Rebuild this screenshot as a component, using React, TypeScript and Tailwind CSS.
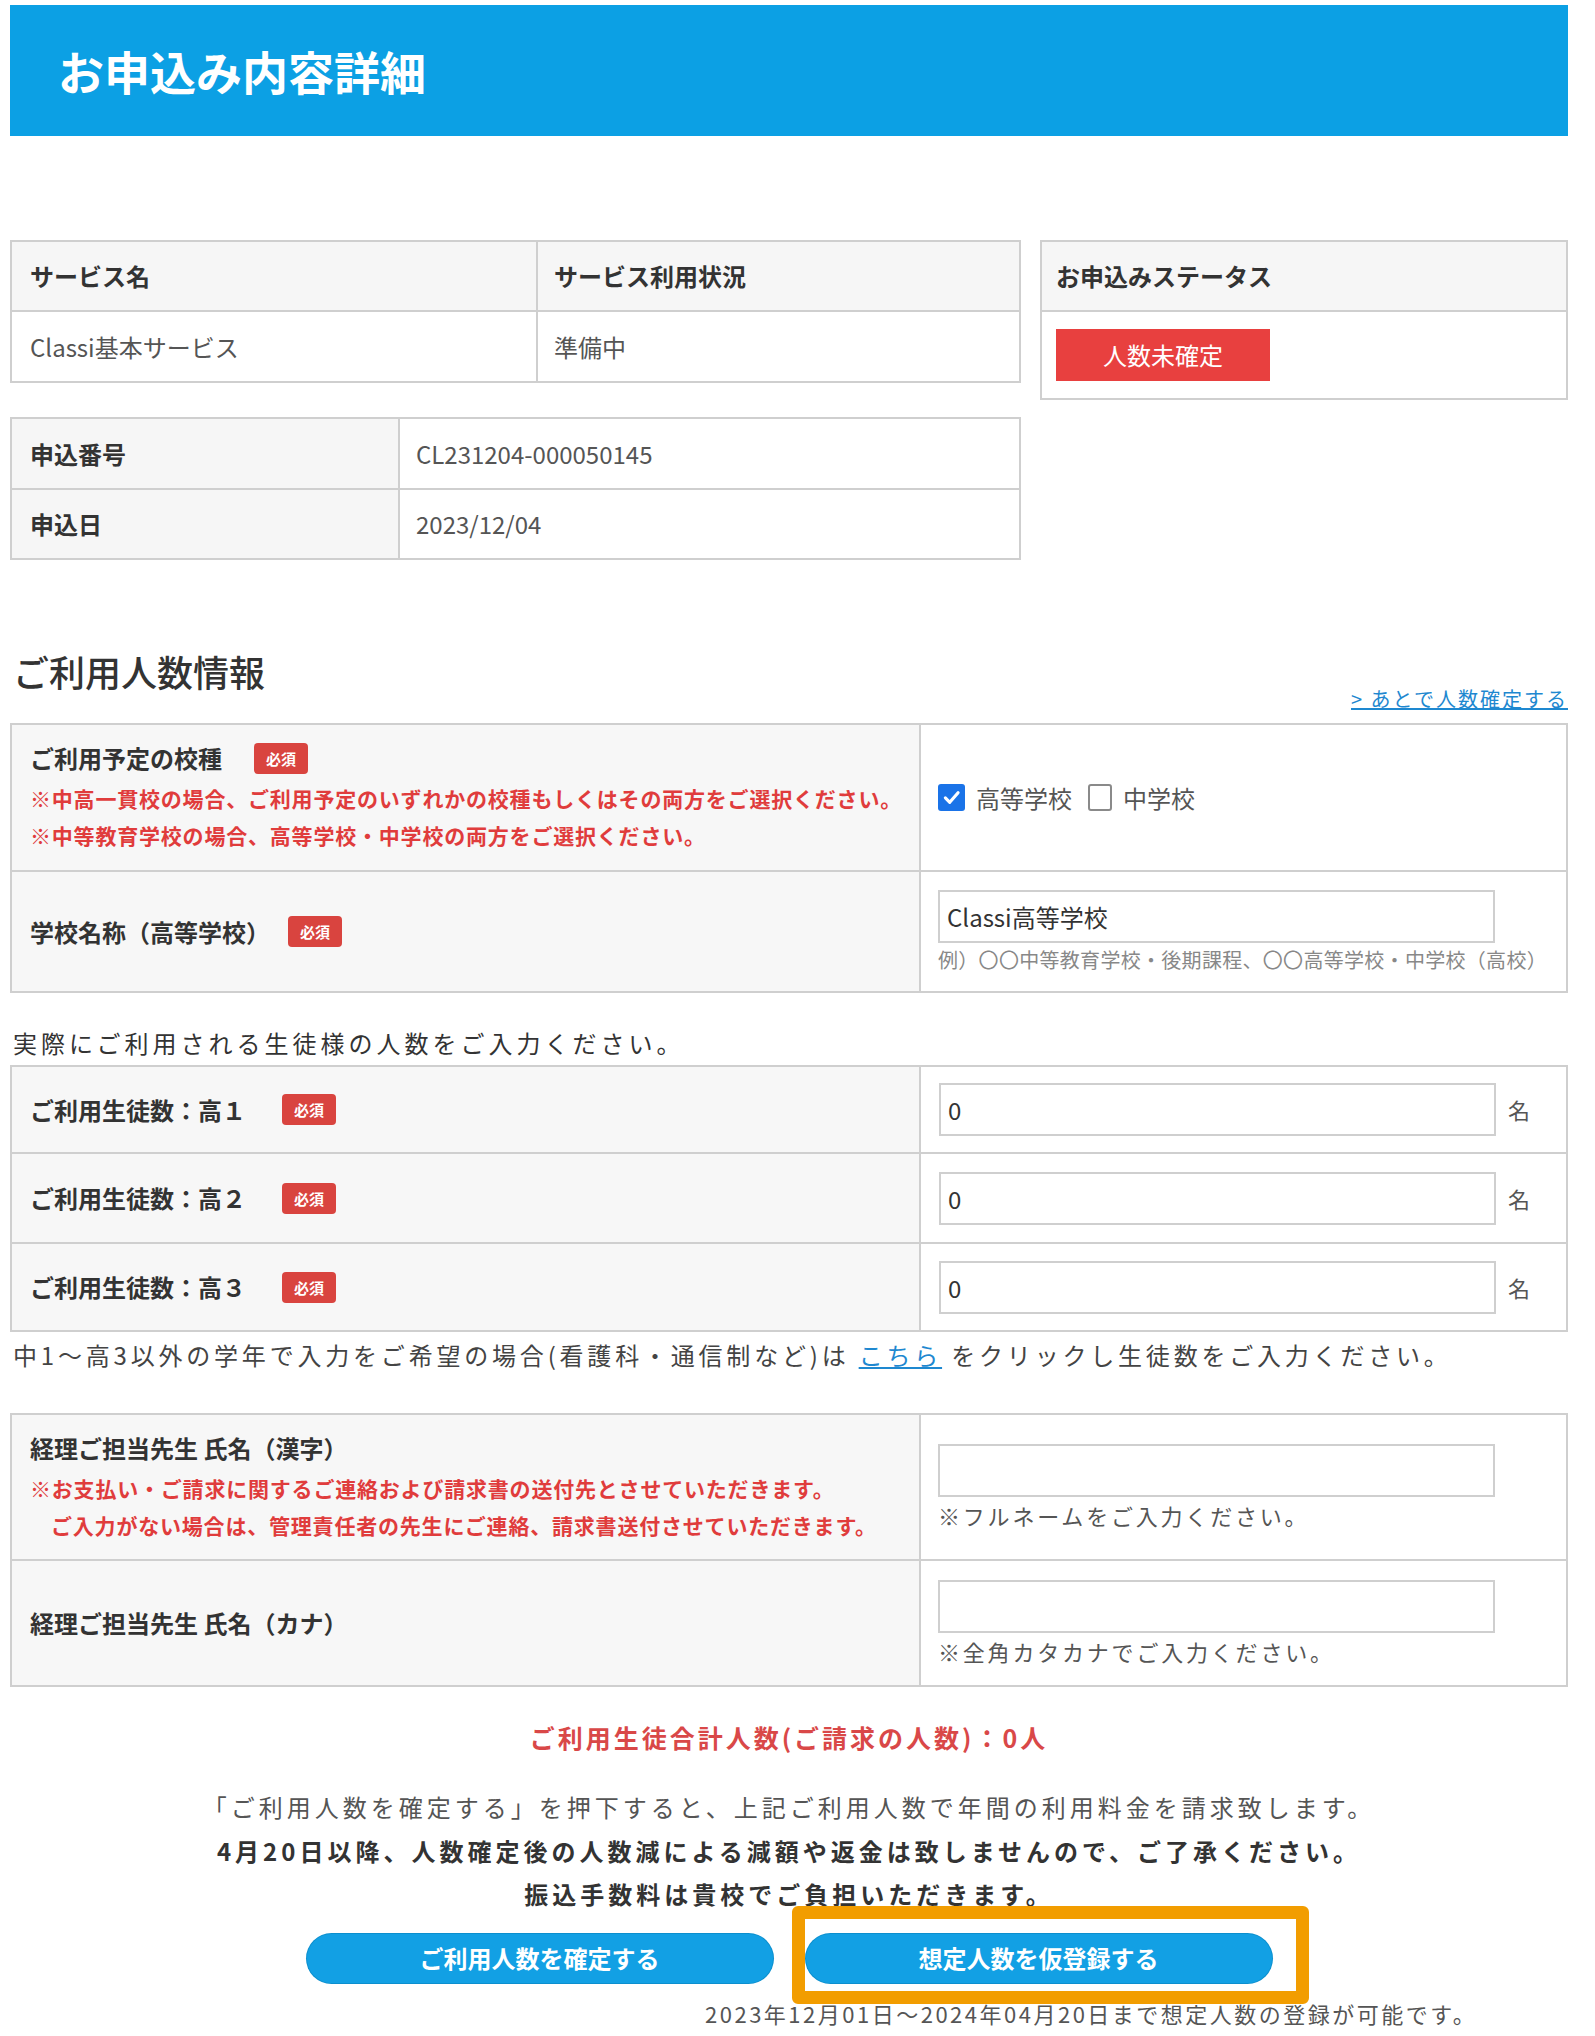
import React from "react";

const line = "border-[#cfcfcf]";

function Required({ className }: { className: string }) {
  return (
    <span
      className={`${className} inline-flex h-[31px] w-[54px] shrink-0 items-center justify-center rounded-[4px] bg-[#d9443f] text-[15px] font-bold leading-none text-white`}
    >
      必須
    </span>
  );
}

function Box({ checked, label }: { checked: boolean; label: string }) {
  return (
    <span className="flex items-center">
      {checked ? (
        <span className="flex h-[27px] w-[27px] items-center justify-center rounded-[3px] bg-[#1a73e8]">
          <svg viewBox="0 0 24 24" className="h-[21px] w-[21px]" fill="none" stroke="#fff" strokeWidth={3.6} strokeLinecap="round" strokeLinejoin="round">
            <polyline points="5 12.5 10 17.5 19.5 6.5" />
          </svg>
        </span>
      ) : (
        <span className="h-[27px] w-[24px] rounded-[3px] border-2 border-[#8a8a8a] bg-white" />
      )}
      <span className="ml-[11px] text-[24px] leading-none text-[#555]">{label}</span>
    </span>
  );
}

function TextBox({ value }: { value: string }) {
  return (
    <input
      readOnly
      value={value}
      className="h-[53px] w-[557px] border-2 border-[#cfcfcf] bg-white px-[7px] text-[24px] text-[#333] outline-none"
    />
  );
}

function CountRow({ label, h, top }: { label: string; h: string; top: boolean }) {
  return (
    <div className={`grid grid-cols-[909px_1fr] ${h} ${top ? "" : "border-t-2"} ${line}`}>
      <div className={`flex items-center border-r-2 ${line} bg-[#f7f7f7] pl-[18px]`}>
        <span className="text-[24px] font-bold text-[#333]">{label}</span>
        <Required className="ml-[36px]" />
      </div>
      <div className="flex items-center pl-[18px]">
        <TextBox value="0" />
        <span className="ml-[12px] text-[22px] text-[#555]">名</span>
      </div>
    </div>
  );
}

export default function App() {
  return (
    <div className="h-[2036px] w-[1595px] overflow-hidden bg-white font-['Noto_Sans_CJK_JP',sans-serif] text-[#333]">
      <div className="ml-[10px] w-[1558px] pt-[5px]">
        <div className="flex h-[131px] items-center bg-[#0ca0e4] pl-[48px] text-[46px] font-bold text-white">
          お申込み内容詳細
        </div>

        {/* 上段: サービス / ステータス */}
        <div className="mt-[104px] flex items-start gap-[19px]">
          <div className="w-[1011px]">
            <div className={`border-2 ${line}`}>
              <div className="grid h-[68px] grid-cols-[526px_1fr] bg-[#f6f6f6] text-[24px] font-bold">
                <div className={`flex items-center border-r-2 ${line} pl-[18px]`}>サービス名</div>
                <div className="flex items-center pl-[16px]">サービス利用状況</div>
              </div>
              <div className={`grid h-[71px] grid-cols-[526px_1fr] border-t-2 ${line} text-[24px] text-[#555]`}>
                <div className={`flex items-center border-r-2 ${line} pl-[18px]`}>Classi基本サービス</div>
                <div className="flex items-center pl-[16px]">準備中</div>
              </div>
            </div>
            <div className={`mt-[34px] border-2 ${line}`}>
              <div className="grid h-[69px] grid-cols-[388px_1fr] text-[24px]">
                <div className={`flex items-center border-r-2 ${line} bg-[#f6f6f6] pl-[18px] font-bold`}>申込番号</div>
                <div className="flex items-center pl-[16px] text-[#555]">CL231204-000050145</div>
              </div>
              <div className={`grid h-[70px] grid-cols-[388px_1fr] border-t-2 ${line} text-[24px]`}>
                <div className={`flex items-center border-r-2 ${line} bg-[#f6f6f6] pl-[18px] font-bold`}>申込日</div>
                <div className="flex items-center pl-[16px] text-[#555]">2023/12/04</div>
              </div>
            </div>
          </div>
          <div className={`w-[528px] border-2 ${line}`}>
            <div className="flex h-[68px] items-center bg-[#f6f6f6] pl-[14px] text-[24px] font-bold">お申込みステータス</div>
            <div className={`flex h-[88px] items-center border-t-2 ${line} pl-[14px]`}>
              <span className="flex h-[52px] w-[214px] items-center justify-center bg-[#e8403f] text-[24px] text-white">
                人数未確定
              </span>
            </div>
          </div>
        </div>

        {/* ご利用人数情報 */}
        <div className="mt-[86px] flex h-[77px] justify-between">
          <h2 className="self-start pl-[3px] text-[36px] font-medium leading-[50px]">ご利用人数情報</h2>
          <a className="mb-[10px] self-end text-[20px] leading-[28px] tracking-[2px] text-[#1e88d0] underline">
            &gt; あとで人数確定する
          </a>
        </div>

        <div className={`border-2 ${line}`}>
          <div className="grid h-[145px] grid-cols-[909px_1fr]">
            <div className={`flex flex-col justify-center border-r-2 ${line} bg-[#f7f7f7] pl-[18px]`}>
              <div className="flex items-center text-[24px] font-bold leading-[34px]">
                ご利用予定の校種
                <Required className="ml-[32px]" />
              </div>
              <p className="mt-[5px] text-[21px] font-bold leading-[37px] tracking-[0.8px] text-[#e03c3c]">
                ※中高一貫校の場合、ご利用予定のいずれかの校種もしくはその両方をご選択ください。
              </p>
              <p className="text-[21px] font-bold leading-[37px] tracking-[0.8px] text-[#e03c3c]">
                ※中等教育学校の場合、高等学校・中学校の両方をご選択ください。
              </p>
            </div>
            <div className="flex items-center gap-[16px] pl-[17px]">
              <Box checked label="高等学校" />
              <Box checked={false} label="中学校" />
            </div>
          </div>
          <div className={`grid h-[121px] grid-cols-[909px_1fr] border-t-2 ${line}`}>
            <div className={`flex items-center border-r-2 ${line} bg-[#f7f7f7] pl-[18px]`}>
              <span className="text-[24px] font-bold">学校名称（高等学校）</span>
              <Required className="ml-[18px]" />
            </div>
            <div className="flex flex-col justify-center pl-[17px]">
              <TextBox value="Classi高等学校" />
              <p className="mt-[4px] text-[20px] leading-[26px] tracking-[0.3px] text-[#888]">
                例）〇〇中等教育学校・後期課程、〇〇高等学校・中学校（高校）
              </p>
            </div>
          </div>
        </div>

        <div className="flex h-[72px] items-end pb-[5px]">
          <p className="pl-[3px] text-[24px] leading-[34px] tracking-[4px]">
            実際にご利用される生徒様の人数をご入力ください。
          </p>
        </div>

        <div className={`border-2 ${line}`}>
          <CountRow label="ご利用生徒数：高１" h="h-[85px]" top />
          <CountRow label="ご利用生徒数：高２" h="h-[90px]" top={false} />
          <CountRow label="ご利用生徒数：高３" h="h-[88px]" top={false} />
        </div>

        <p className="mt-[6px] pl-[3px] text-[24px] leading-[34px] tracking-[3.8px] text-[#444]">
          中1〜高3以外の学年で入力をご希望の場合(看護科・通信制など)は{" "}
          <a className="text-[#1e88d0] underline">こちら</a> をクリックし生徒数をご入力ください。
        </p>

        <div className={`mt-[41px] border-2 ${line}`}>
          <div className="grid h-[144px] grid-cols-[909px_1fr]">
            <div className={`flex flex-col justify-center border-r-2 ${line} bg-[#f7f7f7] pl-[18px]`}>
              <div className="text-[24px] font-bold leading-[34px]">経理ご担当先生 氏名（漢字）</div>
              <p className="mt-[5px] text-[21px] font-bold leading-[37px] tracking-[0.8px] text-[#e03c3c]">
                ※お支払い・ご請求に関するご連絡および請求書の送付先とさせていただきます。
              </p>
              <p className="pl-[21px] text-[21px] font-bold leading-[37px] tracking-[0.8px] text-[#e03c3c]">
                ご入力がない場合は、管理責任者の先生にご連絡、請求書送付させていただきます。
              </p>
            </div>
            <div className="flex flex-col justify-center pl-[17px]">
              <TextBox value="" />
              <p className="mt-[3px] text-[22px] leading-[30px] tracking-[2.8px] text-[#555]">※フルネームをご入力ください。</p>
            </div>
          </div>
          <div className={`grid h-[126px] grid-cols-[909px_1fr] border-t-2 ${line}`}>
            <div className={`flex items-center border-r-2 ${line} bg-[#f7f7f7] pl-[18px]`}>
              <span className="text-[24px] font-bold">経理ご担当先生 氏名（カナ）</span>
            </div>
            <div className="flex flex-col justify-center pl-[17px]">
              <TextBox value="" />
              <p className="mt-[3px] text-[22px] leading-[30px] tracking-[2.8px] text-[#555]">※全角カタカナでご入力ください。</p>
            </div>
          </div>
        </div>

        <p className="mt-[32px] text-center text-[25px] font-bold leading-[36px] tracking-[3px] text-[#d94848]">
          ご利用生徒合計人数(ご請求の人数)：0人
        </p>

        <div className="mt-[30px] text-center text-[24px] leading-[43.5px] tracking-[4px]">
          <p className="text-[#555]">「ご利用人数を確定する」を押下すると、上記ご利用人数で年間の利用料金を請求致します。</p>
          <p className="font-bold">4月20日以降、人数確定後の人数減による減額や返金は致しませんので、ご了承ください。</p>
          <p className="font-bold">振込手数料は貴校でご負担いただきます。</p>
        </div>

        <div className="mt-[18px] flex justify-center gap-[33px]">
          <button className="h-[49px] w-[466px] rounded-full bg-[#12a0e4] text-[24px] font-bold text-white shadow-[0_0_0_1px_#0b8fce]">
            ご利用人数を確定する
          </button>
          <div className="relative">
            <button className="h-[49px] w-[466px] rounded-full bg-[#12a0e4] text-[24px] font-bold text-white shadow-[0_0_0_1px_#0b8fce]">
              想定人数を仮登録する
            </button>
            <div className="pointer-events-none absolute left-[-14px] top-[-28px] z-10 h-[98px] w-[517px] rounded-[6px] border-[13px] border-[#f29d00]" />
          </div>
        </div>

        <p className="ml-[695px] mt-[15px] text-[22px] leading-[30px] tracking-[2.5px] text-[#555]">
          2023年12月01日〜2024年04月20日まで想定人数の登録が可能です。
        </p>
      </div>
    </div>
  );
}
